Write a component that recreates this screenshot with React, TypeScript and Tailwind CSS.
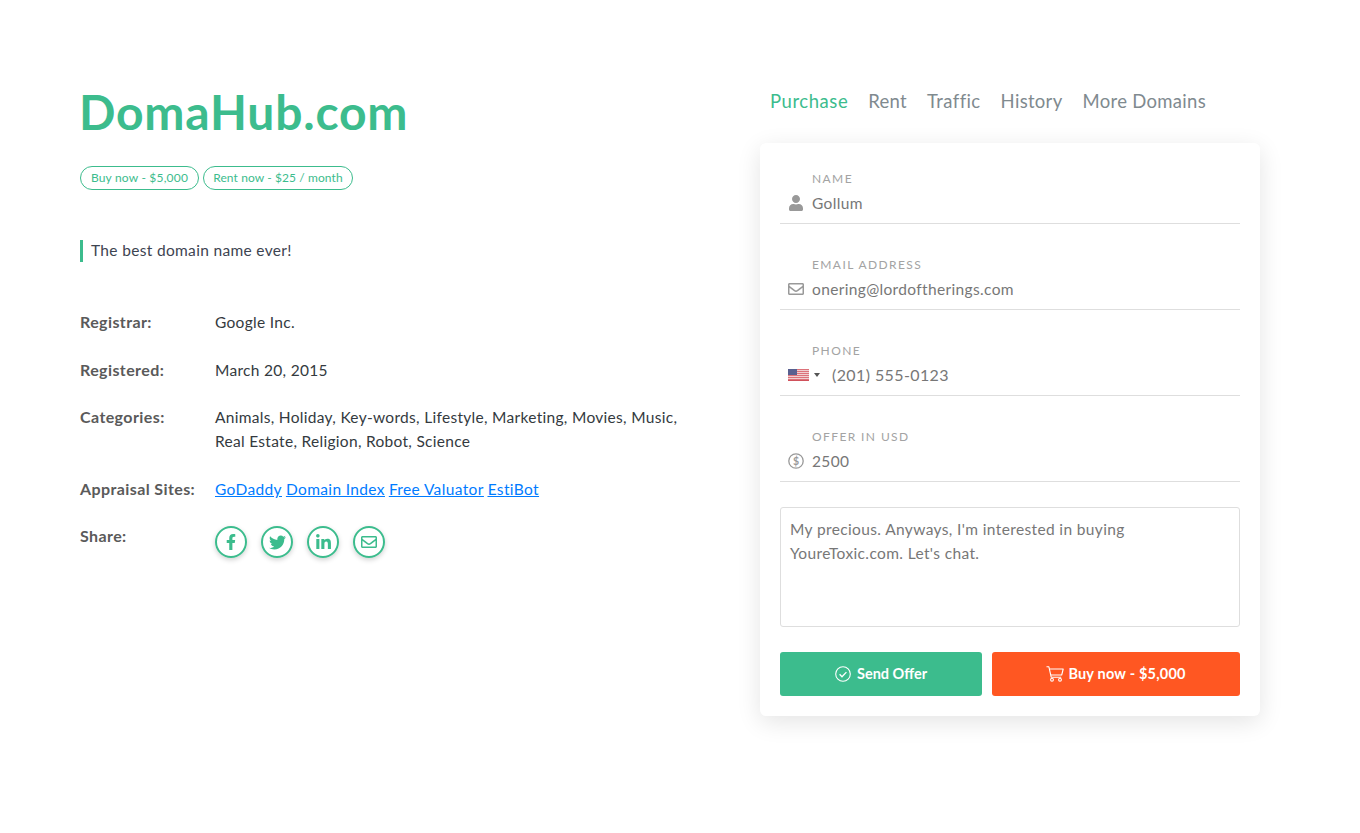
import React from "react";
import { FaFacebookF, FaTwitter, FaLinkedinIn, FaRegEnvelope, FaUser } from "react-icons/fa";

function Field({ label, icon, value, wide }: { label: string; icon: React.ReactNode; value: string; wide?: boolean }) {
  return (
    <div className="mb-[25px] border-b border-[#dedede] pb-2 pt-[9px]">
      <div className="h-[14px] pl-8 text-[12px] leading-[14px] tracking-[1.4px] text-[#a3a3a3]">{label}</div>
      <div className="mt-[5px] flex h-6 items-center">
        <div className={wide ? "flex w-[52px] shrink-0 items-center pl-2" : "flex w-8 shrink-0 items-center justify-center"}>{icon}</div>
        <input
          readOnly
          defaultValue={value}
          className={wide ? "w-full bg-transparent text-[16px] tracking-[0.4px] text-[#777] outline-none" : "w-full bg-transparent pt-px text-[15.5px] tracking-[0.35px] text-[#777] outline-none"}
        />
      </div>
    </div>
  );
}

function Flag() {
  const stripes = [0, 2, 4, 6, 8, 10];
  return (
    <svg width="21" height="12" viewBox="0 0 21 12" className="opacity-90">
      <rect width="21" height="12" fill="#efc9cc" />
      {stripes.map((y) => (
        <rect key={y} y={y} width="21" height="1" fill="#d9636c" />
      ))}
      <rect y="11" width="21" height="1" fill="#cc3f4a" />
      <rect width="9" height="6" fill="#474f85" />
    </svg>
  );
}

function Row({ label, children }: { label: string; children: React.ReactNode }) {
  return (
    <div className="mb-[23.6px] flex text-[15.5px] leading-6">
      <div className="w-[135px] shrink-0 text-[16px] font-bold tracking-[0.4px] text-[#5a5a5a]">{label}</div>
      <div className="flex-1 tracking-[0.3px] text-[#343a40]">{children}</div>
    </div>
  );
}

function Social({ children }: { children: React.ReactNode }) {
  return (
    <span className="flex h-8 w-8 items-center justify-center rounded-full border-2 border-[#3cbc8d] text-[#3cbc8d] shadow-[0_2px_5px_rgba(0,0,0,0.18)]">
      {children}
    </span>
  );
}

export default function App() {
  return (
    <div className="flex min-h-[833px] justify-between bg-white pl-20 pr-[100px] font-['Lato',sans-serif]">
      <div className="w-[600px] pt-[84px]">
        <h1 className="-ml-px h-[58px] text-[48px] font-bold leading-[56px] tracking-[0.8px] text-[#3cbc8d]">DomaHub.com</h1>
        <div className="mt-6 flex gap-1">
          <span className="flex h-6 w-[119px] items-center justify-center rounded-full border border-[#3cbc8d] text-[12px] tracking-[0.2px] text-[#3cbc8d]">Buy now - $5,000</span>
          <span className="flex h-6 w-[150px] items-center justify-center rounded-full border border-[#3cbc8d] text-[12px] tracking-[0.1px] text-[#3cbc8d]">Rent now - $25 / month</span>
        </div>
        <div className="mt-[50px] flex h-[22px] items-center border-l-[3px] border-[#3cbc8d] pl-2 text-[15.5px] tracking-[0.33px] text-[#3d4451]">The best domain name ever!</div>
        <div className="mt-[48px]">
          <Row label="Registrar:">Google Inc.</Row>
          <Row label="Registered:">March 20, 2015</Row>
          <Row label="Categories:">
            Animals, Holiday, Key-words, Lifestyle, Marketing, Movies, Music,
            <br />
            Real Estate, Religion, Robot, Science
          </Row>
          <Row label="Appraisal Sites:">
            <span className="flex gap-1 tracking-[0.36px] text-[#007bff] underline">
              <a href="#">GoDaddy</a>
              <a href="#">Domain Index</a>
              <a href="#">Free Valuator</a>
              <a href="#">EstiBot</a>
            </span>
          </Row>
          <Row label="Share:">
            <div className="flex gap-[14px] pt-[2px]">
              <Social><FaFacebookF size={16} /></Social>
              <Social><FaTwitter size={17} /></Social>
              <Social><FaLinkedinIn size={17} /></Social>
              <Social><FaRegEnvelope size={16} /></Social>
            </div>
          </Row>
        </div>
      </div>

      <div className="w-[500px] pt-[88px]">
        <div className="flex h-[27px] gap-5 pl-[10px] text-[18.5px] leading-[27px] tracking-[0.3px] text-[#808a8f]">
          <span className="tracking-[0.55px] text-[#3cbc8d]">Purchase</span>
          <span>Rent</span>
          <span className="tracking-[0.4px]">Traffic</span>
          <span>History</span>
          <span>More Domains</span>
        </div>
        <div className="mt-7 rounded-md bg-white p-5 shadow-[0_6px_24px_rgba(0,0,0,0.11)]">
          <Field label="NAME" value="Gollum" icon={<FaUser size={16} className="text-[#999]" />} />
          <Field label="EMAIL ADDRESS" value="onering@lordoftherings.com" icon={<FaRegEnvelope size={16} className="text-[#999]" />} />
          <Field
            label="PHONE"
            value="(201) 555-0123"
            wide
            icon={
              <span className="flex items-center gap-[5px]">
                <Flag />
                <svg width="6" height="4" viewBox="0 0 6 4"><path d="M0 0h6L3 4z" fill="#555" /></svg>
              </span>
            }
          />
          <Field
            label="OFFER IN USD"
            value="2500"
            icon={
              <svg width="16" height="16" viewBox="0 0 16 16" fill="none">
                <circle cx="8" cy="8" r="7.2" stroke="#999" strokeWidth="1.3" />
                <text x="8" y="11.6" textAnchor="middle" fontSize="10.5" fontWeight="700" fill="#999">$</text>
              </svg>
            }
          />
          <textarea
            readOnly
            defaultValue={"My precious. Anyways, I'm interested in buying\nYoureToxic.com. Let's chat."}
            className="mb-[25px] block h-[120px] w-full resize-none rounded-[3px] border border-[#dedede] px-[9px] py-[9px] text-[15.5px] leading-6 tracking-[0.37px] text-[#777] outline-none"
          />
          <div className="flex gap-[10px]">
            <button className="flex h-11 w-[202px] items-center justify-center gap-[6px] rounded-[3px] bg-[#3cbc8d] text-[14.5px] font-bold text-white">
              <svg width="16" height="16" viewBox="0 0 16 16" fill="none" stroke="white" strokeWidth="1.1">
                <circle cx="8" cy="8" r="7.3" />
                <path d="M4.6 8.3l2.4 2.4 4.4-4.6" strokeWidth="1.3" />
              </svg>
              Send Offer
            </button>
            <button className="flex h-11 flex-1 items-center justify-center gap-[4px] rounded-[3px] bg-[#ff5722] text-[14.5px] font-bold tracking-[0.2px] text-white">
              <svg width="18" height="16" viewBox="0 0 18 16" fill="none" stroke="white" strokeWidth="1.1" strokeLinejoin="round">
                <path d="M0.5 0.8h2.4l2.3 10.4h10" />
                <path d="M3.6 3h13.6l-1.5 6H4.9" />
                <circle cx="6" cy="13.7" r="1.4" />
                <circle cx="14" cy="13.7" r="1.4" />
              </svg>
              Buy now - $5,000
            </button>
          </div>
        </div>
      </div>
    </div>
  );
}
